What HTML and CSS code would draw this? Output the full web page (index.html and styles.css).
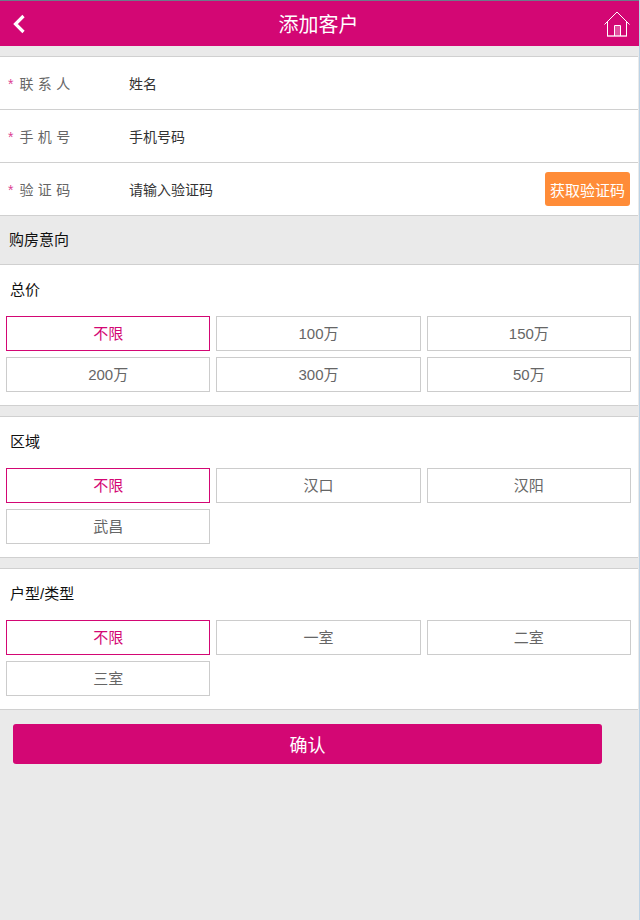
FILE: index.html
```html
<!DOCTYPE html>
<html lang="zh-CN">
  <head>
    <meta charset="utf-8" />
    <title>添加客户</title>
    <link rel="stylesheet" href="styles.css">
  </head>
  <body>
    <div class="page">
      <header class="site-header">
        <a class="back" href="#">
          <svg width="14" height="20" viewBox="0 0 14 20"><path d="M11.5 2 L3.5 10 L11.5 18" fill="none" stroke="#fff" stroke-width="3.2"/></svg>
        </a>
        <h1 class="site-title">添加客户</h1>
        <a class="home" href="#">
          <svg width="26" height="26" viewBox="0 0 26 26">
            <path d="M0.5 13.5 L13 1 L25.5 13.5" fill="none" stroke="#fff" stroke-width="1"/>
            <path d="M3.5 10.5 V25 M22.5 10.5 V25" fill="none" stroke="#fff" stroke-width="1"/>
            <path d="M10.5 25 V14.5 H16.5 V25" fill="none" stroke="#fff" stroke-width="1"/>
            <rect x="11" y="15" width="5" height="10" fill="#fff" opacity="0.3"/>
            <rect x="3" y="24" width="20" height="2" fill="#fff" opacity="0.65"/>
          </svg>
        </a>
      </header>

      <div class="contact">
        <div class="field">
          <label class="field-label"><span class="star">*</span>联 系 人</label>
          <span class="field-input">姓名</span>
        </div>
        <div class="field">
          <label class="field-label"><span class="star">*</span>手 机 号</label>
          <span class="field-input">手机号码</span>
        </div>
        <div class="field">
          <label class="field-label"><span class="star">*</span>验 证 码</label>
          <span class="field-input">请输入验证码</span>
          <button class="code-btn">获取验证码</button>
        </div>
      </div>

      <div class="intent">购房意向</div>

      <section class="group group-first">
        <h2 class="group-title">总价</h2>
        <div class="options">
          <a class="option active">不限</a>
          <a class="option">100万</a>
          <a class="option">150万</a>
          <a class="option">200万</a>
          <a class="option">300万</a>
          <a class="option">50万</a>
        </div>
      </section>

      <section class="group">
        <h2 class="group-title">区域</h2>
        <div class="options">
          <a class="option active">不限</a>
          <a class="option">汉口</a>
          <a class="option">汉阳</a>
          <a class="option">武昌</a>
        </div>
      </section>

      <section class="group">
        <h2 class="group-title">户型/类型</h2>
        <div class="options">
          <a class="option active">不限</a>
          <a class="option">一室</a>
          <a class="option">二室</a>
          <a class="option">三室</a>
        </div>
      </section>

      <button class="submit">确认</button>
    </div>
  </body>
</html>
```

FILE: styles.css
```css
html,
body {
  margin: 0;
  padding: 0;
  background-color: #bcd3e6;
}

body {
  font-family: "Liberation Sans", "Noto Sans CJK SC", sans-serif;
  font-size: 14px;
}

.page {
  width: 639px;
  height: 920px;
  overflow: hidden;
  background-color: #eaeaea;
}

.site-header {
  display: flex;
  align-items: center;
  justify-content: space-between;
  box-sizing: border-box;
  height: 46px;
  padding: 0 9px 0 12px;
  background-color: #d30774;
  border-top: 1px solid #6b7b8a;
}
.back {
  display: flex;
}
.home {
  display: flex;
}
.site-title {
  margin: 0 0 0 7px;
  font-size: 20px;
  font-weight: normal;
  color: white;
}

.contact {
  margin: 10px 1px 0 0;
  background-color: white;
  border-top: 1px solid #d0d0d0;
}
.field {
  display: flex;
  align-items: center;
  box-sizing: border-box;
  height: 53px;
  padding: 0 8px 0 8px;
  border-bottom: 1px solid #d0d0d0;
}
.field-label {
  width: 121px;
  color: #666;
  word-spacing: 0.5px;
}
.star {
  color: #dc3f92;
  margin-right: 6px;
}
.field-input {
  flex-grow: 1;
  color: #333;
}
.code-btn {
  width: 85px;
  height: 34px;
  padding: 0;
  border: none;
  border-radius: 3px;
  background-color: #ff8c38;
  color: white;
  font-family: inherit;
  font-size: 15px;
}

.intent {
  box-sizing: border-box;
  height: 49px;
  line-height: 48px;
  padding-left: 9px;
  font-size: 15px;
  color: #111;
  border-bottom: 1px solid #d0d0d0;
}

.group {
  box-sizing: border-box;
  height: 142px;
  margin: 10px 1px 0 0;
  padding: 0 7px 0 6px;
  background-color: white;
  border-top: 1px solid #d0d0d0;
  border-bottom: 1px solid #d0d0d0;
}
.group-first {
  height: 141px;
  margin-top: 0;
  border-top: none;
}
.group-title {
  margin: 0;
  padding-left: 4px;
  height: 51px;
  line-height: 49px;
  font-size: 15px;
  font-weight: normal;
  color: #111;
}
.options {
  display: grid;
  grid-template-columns: repeat(3, 1fr);
  gap: 6px;
}
.option {
  box-sizing: border-box;
  height: 35px;
  line-height: 33px;
  text-align: center;
  font-size: 15px;
  color: #666;
  border: 1px solid #ccc;
}
.option.active {
  color: #d30774;
  border-color: #d30774;
}

.submit {
  display: block;
  width: 589px;
  height: 40px;
  margin: 14px 0 0 13px;
  padding: 0;
  border: none;
  border-radius: 3px;
  background-color: #d30774;
  color: white;
  font-family: inherit;
  font-size: 18px;
}
```
